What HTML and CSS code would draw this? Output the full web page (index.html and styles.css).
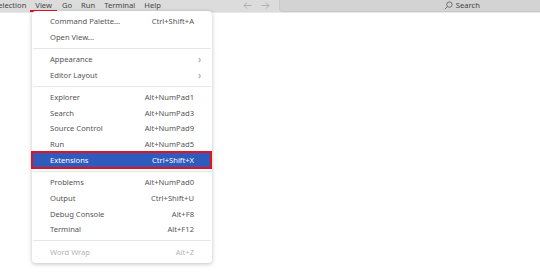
FILE: index.html
```html
<!DOCTYPE html>
<html lang="en">
<head>
    <meta charset="UTF-8">
    <title>View menu</title>
    <link rel="stylesheet" href="styles.css">
</head>
<body>
    <div class="titlebar">
        <div class="menubar">
            <span class="menubar-item cut">Selection</span>
            <span class="menubar-item active">View</span>
            <span class="menubar-item">Go</span>
            <span class="menubar-item">Run</span>
            <span class="menubar-item">Terminal</span>
            <span class="menubar-item">Help</span>
        </div>
        <div class="nav">
            <svg width="9" height="7" viewBox="0 0 9 7">
                <path d="M8.5 3.5H1M4 0.5L1 3.5L4 6.5" fill="none" stroke="#aaa" stroke-width="0.9"/>
            </svg>
            <svg width="9" height="7" viewBox="0 0 9 7">
                <path d="M0.5 3.5H8M5 0.5L8 3.5L5 6.5" fill="none" stroke="#aaa" stroke-width="0.9"/>
            </svg>
        </div>
        <div class="search">
            <svg class="search-icon" width="9" height="9" viewBox="0 0 10 10">
                <circle cx="6" cy="4" r="3" fill="none" stroke="#666" stroke-width="1"/>
                <line x1="3.8" y1="6.2" x2="1" y2="9" stroke="#666" stroke-width="1"/>
            </svg>
            <span>Search</span>
        </div>
    </div>

    <div class="menu">
        <div class="menu-item"><span>Command Palette...</span><span class="key">Ctrl+Shift+A</span></div>
        <div class="menu-item"><span>Open View...</span><span class="key"></span></div>
        <div class="separator"></div>
        <div class="menu-item"><span>Appearance</span><span class="chevron">&#8250;</span></div>
        <div class="menu-item"><span>Editor Layout</span><span class="chevron">&#8250;</span></div>
        <div class="separator"></div>
        <div class="menu-item"><span>Explorer</span><span class="key">Alt+NumPad1</span></div>
        <div class="menu-item"><span>Search</span><span class="key">Alt+NumPad3</span></div>
        <div class="menu-item"><span>Source Control</span><span class="key">Alt+NumPad9</span></div>
        <div class="menu-item"><span>Run</span><span class="key">Alt+NumPad5</span></div>
        <div class="menu-item selected"><span>Extensions</span><span class="key">Ctrl+Shift+X</span></div>
        <div class="separator"></div>
        <div class="menu-item"><span>Problems</span><span class="key">Alt+NumPad0</span></div>
        <div class="menu-item"><span>Output</span><span class="key">Ctrl+Shift+U</span></div>
        <div class="menu-item"><span>Debug Console</span><span class="key">Alt+F8</span></div>
        <div class="menu-item"><span>Terminal</span><span class="key">Alt+F12</span></div>
        <div class="separator"></div>
        <div class="menu-item disabled"><span>Word Wrap</span><span class="key">Alt+Z</span></div>
    </div>
</body>
</html>
```

FILE: styles.css
```css
* {
    margin: 0;
    padding: 0;
    box-sizing: border-box;
}

body {
    font-family: 'Noto Sans', sans-serif;
    font-size: 7.6px;
    background: #ffffff;
    color: #555;
    width: 540px;
    height: 272px;
    overflow: hidden;
    position: relative;
}

.titlebar {
    height: 13px;
    background: #dcdcdc;
    border-bottom: 1px solid #e8e8e8;
    display: flex;
    align-items: flex-start;
}

.menubar {
    display: flex;
    height: 12px;
    margin-left: -10px;
}

.menubar-item {
    color: #444;
    padding: 0 4px;
    line-height: 11px;
    margin-right: 1px;
}

.menubar-item.cut {
    margin-right: 0;
}

.menubar-item.active {
    border-bottom: 2px solid #e0141e;
    padding: 0 5px;
}

.nav {
    display: flex;
    align-items: center;
    gap: 9px;
    margin-left: 77px;
    height: 11px;
}

.search {
    margin-left: 9px;
    flex: 1;
    height: 12px;
    background: #d3d3d3;
    border-left: 1px solid #c9c9c9;
    border-bottom: 1px solid #c9c9c9;
    border-bottom-left-radius: 4px;
    display: flex;
    align-items: center;
    padding-left: 164px;
    gap: 3px;
    color: #444;
    line-height: 11px;
}

.search-icon {
    display: block;
}

.menu {
    position: absolute;
    left: 32px;
    top: 11px;
    width: 180px;
    background: #ffffff;
    border-radius: 4px;
    box-shadow: 0 1px 4px rgba(0, 0, 0, 0.25);
    padding: 2px 0 3px;
}

.menu-item {
    display: flex;
    justify-content: space-between;
    align-items: center;
    height: 15.75px;
    padding: 0 18px 0 18px;
    color: #555;
    position: relative;
}

.key {
    color: #555;
}

.chevron {
    color: #999;
    font-size: 10px;
    margin-right: -7px;
}

.menu-item.selected {
    background: #2f5bbf;
    color: #ffffff;
    margin: 0 1px;
    padding: 0 17px;
}

.menu-item.selected .key {
    color: #ffffff;
}

.menu-item.selected::after {
    content: '';
    position: absolute;
    left: -2px;
    right: -1px;
    top: -1px;
    bottom: -1px;
    border: 2px solid #e0141e;
}

.menu-item.disabled,
.menu-item.disabled .key {
    color: #b5b5b5;
}

.separator {
    height: 1px;
    background: #e6e6e6;
    margin: 3px 1px 2.5px;
}
```
